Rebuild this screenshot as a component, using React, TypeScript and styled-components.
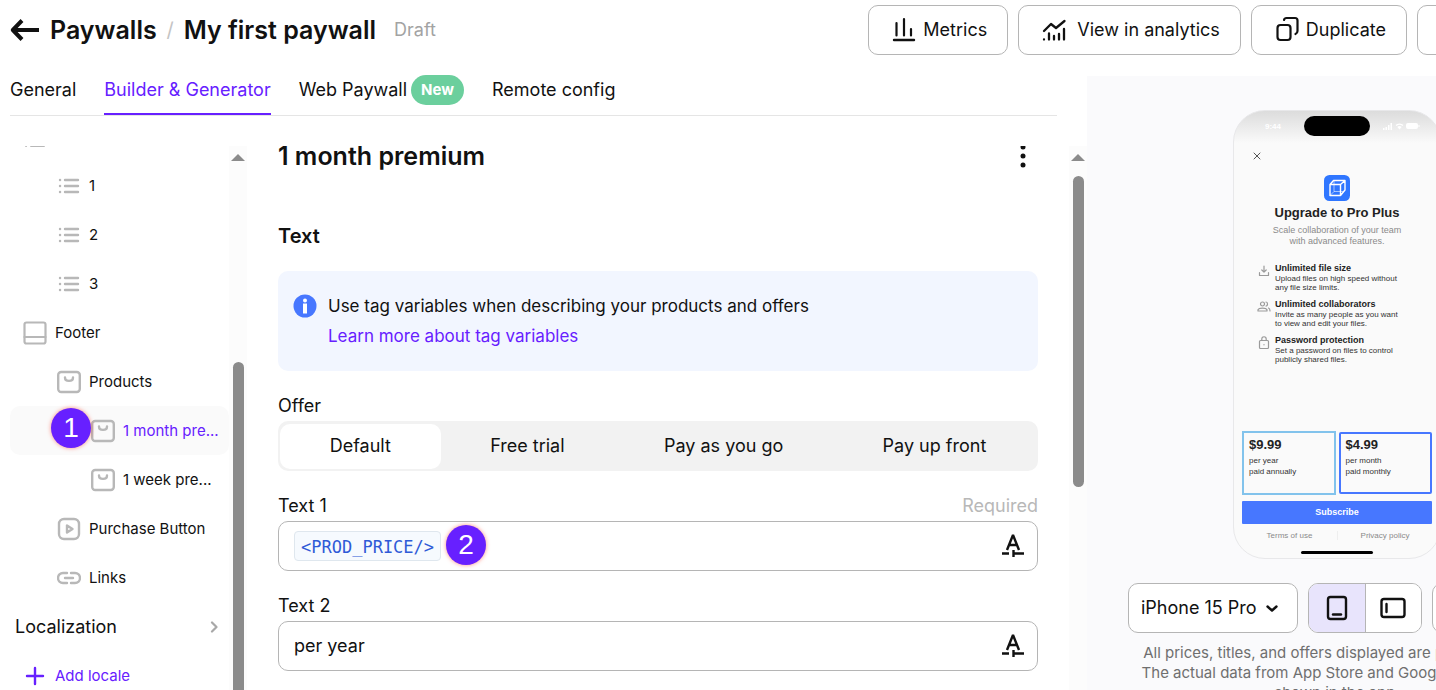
import React from "react";
import styled, { createGlobalStyle } from "styled-components";

const GlobalStyle = createGlobalStyle`
  *, *::before, *::after { box-sizing: border-box; }
  body {
    margin: 0;
    background: #fff;
    color: #111;
    font-family: Inter, "Liberation Sans", sans-serif;
    font-size: 18px;
    line-height: 30px;
    overflow: hidden;
  }
  button, input, select { font: inherit; color: inherit; }
  button { cursor: pointer; background: none; border: 0; padding: 0; }
  h1, h2, h3, p, ul { margin: 0; padding: 0; font: inherit; }
  ul { list-style: none; }
  svg { display: block; flex: none; }
`;

const purple = "#6720ff";
const line = "#b5b5b5";
const iconGrey = "#b8b8b8";

const Viewport = styled.div`
  height: 100vh;
  overflow: hidden;
`;

const Page = styled.div`
  display: flex;
  flex-direction: column;
  height: 100%;
  min-width: 1587px;
`;

/* Header */

const Header = styled.header`
  display: flex;
  justify-content: space-between;
  height: 76px;
  padding: 5px 10px 0;
`;

const Crumbs = styled.div`
  display: flex;
  align-items: center;
  height: 50px;
`;

const Title = styled.h1`
  font-size: 25px;
  font-weight: 600;
`;

const BackLink = styled.a`
  display: flex;
  align-items: center;
  gap: 10px;
  color: inherit;
  text-decoration: none;
  font-size: 25px;
  font-weight: 600;
`;

const Slash = styled.span`
  width: 27px;
  text-align: center;
  font-size: 20px;
  color: #c4c4c4;
`;

const Status = styled.span`
  margin-left: 18px;
  color: #a3a3a3;
`;

const Actions = styled.div`
  display: flex;
  gap: 10px;
`;

const ActionButton = styled.button<{ $gap?: number }>`
  display: flex;
  align-items: center;
  gap: ${(p) => p.$gap ?? 6}px;
  height: 50px;
  min-width: 140px;
  padding: 0 20px;
  border: 1px solid ${line};
  border-radius: 10px;
  background: #fff;
`;

const SaveButton = styled(ActionButton)`
  width: 160px;
`;

/* Columns */

const Body = styled.div`
  display: flex;
  flex: 1;
  min-height: 0;
`;

const Workspace = styled.div`
  display: flex;
  flex-direction: column;
  flex: 1;
  min-width: 0;
`;

const Tabs = styled.nav`
  display: flex;
  flex: none;
  gap: 28px;
  height: 40px;
  margin: 0 30px 30px 10px;
  border-bottom: 1px solid #e5e5e5;
`;

const Tab = styled.a<{ $active?: boolean }>`
  display: flex;
  gap: 4px;
  height: 39px;
  line-height: 28px;
  color: ${(p) => (p.$active ? purple : "inherit")};
  border-bottom: 2px solid ${(p) => (p.$active ? purple : "transparent")};
  text-decoration: none;
  white-space: nowrap;
`;

const NewBadge = styled.span`
  height: 30px;
  margin-top: -1px;
  padding: 0 10px;
  border-radius: 15px;
  background: #6bcf9d;
  color: #fff;
  font-size: 15px;
  font-weight: 700;
  line-height: 30px;
`;

const Panes = styled.div`
  display: flex;
  flex: 1;
  min-height: 0;
`;

const ScrollTrack = styled.div`
  display: flex;
  flex: none;
  flex-direction: column;
  align-items: center;
  width: 18px;
  padding-top: 8px;
  background: #fcfcfc;
`;

const Arrow = styled.div`
  border: 7px solid transparent;
  border-top: 0;
  border-bottom: 7px solid #8b8b8b;
`;

const Thumb = styled.div<{ $top: number; $length?: number }>`
  flex: ${(p) => (p.$length ? "none" : "1")};
  width: 11px;
  height: ${(p) => (p.$length ? p.$length + "px" : "auto")};
  margin-top: ${(p) => p.$top}px;
  border-radius: ${(p) => (p.$length ? "6px" : "6px 6px 0 0")};
  background: #8b8b8b;
`;

/* Sidebar tree */

const Sidebar = styled.aside`
  display: flex;
  flex: none;
  width: 247px;
  padding-left: 10px;
  overflow: hidden;
`;

const Tree = styled.ul`
  flex: 1;
  min-width: 0;
  margin-top: -34px;
`;

const TreeScroll = styled.div`
  flex: 1;
  min-width: 0;
  overflow: hidden;
`;

const TreeItem = styled.li`
  position: relative;
`;

const TreeButton = styled.button<{ $level: number; $active?: boolean; $accent?: boolean }>`
  display: flex;
  align-items: center;
  gap: 8px;
  width: 100%;
  height: 49px;
  padding: 0 8px 0 ${(p) => 13 + p.$level * 34}px;
  border-radius: 10px;
  background: ${(p) => (p.$active ? "#fafafa" : "none")};
  color: ${(p) => (p.$active || p.$accent ? purple : "inherit")};
  font-size: 15px;
  text-align: left;
  white-space: nowrap;
`;

const TreeSection = styled.button`
  display: flex;
  align-items: center;
  justify-content: space-between;
  width: 100%;
  height: 49px;
  padding: 0 10px 0 5px;
`;

const Callout = styled.span<{ $left: number; $top: number }>`
  position: absolute;
  left: ${(p) => p.$left}px;
  top: ${(p) => p.$top}px;
  width: 40px;
  height: 40px;
  border-radius: 50%;
  background: ${purple};
  box-shadow: 0 0 4px rgba(255, 70, 50, 0.6);
  color: #fff;
  font: 28px/40px "Liberation Sans", Arial, sans-serif;
  text-align: center;
`;

/* Editor */

const Editor = styled.main`
  flex: 1;
  min-width: 0;
  padding: 0 31px;
`;

const EditorHead = styled.div`
  display: flex;
  justify-content: space-between;
  height: 75px;
`;

const PaneTitle = styled.h2`
  font-size: 25px;
  font-weight: 600;
  line-height: 20px;
`;

const MenuButton = styled.button`
  width: 30px;
  height: 22px;
`;

const SectionTitle = styled.h3`
  margin-bottom: 20px;
  font-size: 20px;
  font-weight: 600;
`;

const Notice = styled.div`
  display: flex;
  gap: 11px;
  margin-bottom: 20px;
  padding: 20px 15px;
  border-radius: 10px;
  background: #f2f6ff;
  font-size: 17px;
`;

const NoticeIcon = styled.span`
  padding-top: 3px;
`;

const NoticeLink = styled.a`
  color: ${purple};
  text-decoration: none;
`;

const Field = styled.div`
  position: relative;
  margin-bottom: 20px;
`;

const FieldHead = styled.div`
  display: flex;
  justify-content: space-between;
`;

const Required = styled.span`
  color: #b8b8b8;
`;

const Segments = styled.div`
  display: flex;
  height: 50px;
  padding: 3px 2px 2px;
  border-radius: 10px;
  background: #f2f2f2;
`;

const Segment = styled.button<{ $active?: boolean }>`
  flex: 1 1 auto;
  padding-bottom: 2px;
  border-radius: 10px;
  background: ${(p) => (p.$active ? "#fff" : "none")};
`;

const InputBox = styled.div`
  display: flex;
  align-items: center;
  height: 50px;
  padding: 0 11px 0 15px;
  border: 1px solid ${line};
  border-radius: 10px;
`;

const TagChip = styled.code`
  flex: none;
  height: 30px;
  padding: 0 6px;
  border: 1px solid #dfe7ee;
  border-radius: 4px;
  background: #f6fafe;
  color: #2f5bd7;
  font: 17px/30px "DejaVu Sans Mono", monospace;
`;

const TextInput = styled.input`
  flex: 1;
  min-width: 0;
  padding: 0;
  border: 0;
  outline: 0;
  background: none;
`;

/* Preview */

const Preview = styled.aside`
  display: flex;
  flex: none;
  flex-direction: column;
  align-items: center;
  width: 500px;
  padding-top: 34px;
  background: #fafafc;
`;

const Phone = styled.div`
  display: flex;
  flex: none;
  flex-direction: column;
  width: 208px;
  height: 449px;
  margin-bottom: 24px;
  padding: 0 8px;
  border: 1px solid #e8e8ea;
  border-radius: 32px;
  background: linear-gradient(#dcdcdc, #fafafa 32px);
  font-family: "Liberation Sans", Arial, sans-serif;
  font-size: 8px;
  line-height: 9px;
  color: #333;
`;

const StatusBar = styled.div`
  display: grid;
  grid-template-columns: 1fr 66px 1fr;
  align-items: center;
  justify-items: center;
  height: 20px;
  margin-top: 5px;
  color: #fff;
  font-weight: 700;
`;

const Island = styled.div`
  width: 66px;
  height: 20px;
  border-radius: 10px;
  background: #000;
`;

const CloseButton = styled.button`
  width: 10px;
  height: 10px;
  margin: 15px 0 14px 10px;
`;

const Hero = styled.div`
  display: flex;
  flex-direction: column;
  align-items: center;
  height: 87px;
  text-align: center;
`;

const HeroTitle = styled.h3`
  font-size: 13px;
  font-weight: 700;
  line-height: 24px;
  color: #222;
`;

const HeroText = styled.p`
  width: 140px;
  font-size: 9px;
  line-height: 11px;
  color: #8a8a8a;
`;

const Feature = styled.li`
  display: flex;
  gap: 4px;
  height: 36px;
  padding-left: 15px;
`;

const FeatureIcon = styled.span`
  padding-top: 2px;
`;

const FeatureTitle = styled.h3`
  font-size: 9px;
  font-weight: 700;
  line-height: 12px;
  color: #222;
`;

const Plans = styled.div`
  display: flex;
  align-items: center;
  gap: 3px;
  height: 64px;
  margin-top: auto;
`;

const Plan = styled.button<{ $selected?: boolean }>`
  flex: 1;
  height: ${(p) => (p.$selected ? 62 : 64)}px;
  padding: ${(p) => (p.$selected ? 3 : 4)}px 5px;
  border: 2px solid ${(p) => (p.$selected ? "#4777ff" : "#82c3ec")};
  border-radius: ${(p) => (p.$selected ? 2 : 0)}px;
  display: flex;
  flex-direction: column;
  line-height: 11px;
  text-align: left;
`;

const Price = styled.strong`
  margin-bottom: 2px;
  font-size: 13px;
  line-height: 16px;
  color: #222;
`;

const Subscribe = styled.button`
  height: 23px;
  margin-top: 6px;
  border-radius: 1px;
  background: #4777ff;
  color: #fff;
  font-size: 9px;
  font-weight: 700;
`;

const Legal = styled.div`
  display: grid;
  grid-template-columns: 1fr 1fr;
  height: 9px;
  margin-top: 7px;
  text-align: center;
`;

const LegalLink = styled.a`
  color: #8a8a8a;
  text-decoration: none;
  & + & { border-left: 1px solid #eee; }
`;

const HomeBar = styled.div`
  align-self: center;
  flex: none;
  width: 72px;
  height: 3px;
  margin: 11px 0 4px;
  border-radius: 2px;
  background: #000;
`;

const DeviceControls = styled.div`
  display: flex;
  flex: none;
  gap: 10px;
  height: 50px;
`;

const SelectWrap = styled.label`
  position: relative;
  svg { position: absolute; right: 19px; top: 18px; pointer-events: none; }
`;

const DeviceSelect = styled.select`
  appearance: none;
  width: 170px;
  height: 50px;
  padding: 0 12px;
  border: 1px solid ${line};
  border-radius: 10px;
  background: #fff;
`;

const Orientation = styled.div`
  display: flex;
  width: 114px;
  border: 1px solid ${line};
  border-radius: 10px;
  background: #fff;
  overflow: hidden;
`;

const OrientationButton = styled.button<{ $active?: boolean }>`
  display: flex;
  flex: 1;
  align-items: center;
  justify-content: center;
  background: ${(p) => (p.$active ? "#e8e4fc" : "#fff")};
  & + & { border-left: 1px solid ${line}; }
`;

const Disclaimer = styled.p`
  flex: none;
  width: 410px;
  margin-top: 10px;
  color: #6f6f6f;
  font-size: 15px;
  line-height: 20px;
  text-align: center;
`;

/* Icons */

const Svg = ({ w = 24, h = w, sw = 2, color = "currentColor", children }: {
  w?: number; h?: number; sw?: number; color?: string; children: React.ReactNode;
}) => (
  <svg width={w} height={h} viewBox={`0 0 ${w} ${h}`} fill="none" stroke={color}
    strokeWidth={sw} strokeLinecap="round" strokeLinejoin="round" aria-hidden="true">
    {children}
  </svg>
);

const BackIcon = () => (
  <Svg w={30} h={24} sw={4}>
    <path d="M29 12H4" strokeLinecap="butt" />
    <path d="M12 2.500L2.800 12l9.200 9.500" strokeLinecap="butt" />
  </Svg>
);

const MetricsIcon = () => (
  <Svg w={28} h={28} sw={2.2}>
    <path d="M7.500 7v12.500M15 3v16.500M22 13v6.500" />
    <path d="M5 24h20" strokeWidth="2.400" />
  </Svg>
);

const AnalyticsIcon = () => (
  <Svg w={30} h={28} sw={2.3}>
    <path d="M5 15l7-7 5 4 8.500-7" />
    <path d="M5 23.500v.1M10 17.500v6M15 20v3.500M20 18v5.500M25 13v10.500" />
  </Svg>
);

const DuplicateIcon = () => (
  <Svg w={28} h={28} sw={2.2}>
    <rect x="5.500" y="9" width="13" height="15" rx="3" />
    <path d="M12 4c.3-1.300 1-2 2.500-2H23c1.700 0 2.500.8 2.500 2.500V15c0 1.700-.8 2.500-2 3" />
  </Svg>
);

const ListIcon = () => (
  <Svg color={iconGrey} sw={2.4}>
    <path d="M8 6h13M8 12h13M8 18h13M3 6h.1M3 12h.1M3 18h.1" />
  </Svg>
);

const FeatureListIcon = () => (
  <Svg color={iconGrey}>
    <path d="M8 3h13M8 12h13M8 21h13M3 3h.1M3 12h.1M3 21h.1" />
  </Svg>
);

const FooterIcon = () => (
  <Svg color={iconGrey} sw={2.2}>
    <rect x="1.500" y="1.500" width="21" height="21" rx="2" />
    <path d="M1.500 16h21" />
  </Svg>
);

const ProductIcon = () => (
  <Svg color={iconGrey} sw={2.4}>
    <rect x="1.200" y="2" width="21.600" height="20" rx="3" />
    <path d="M8 7.500c0 4.500 8 4.500 8 0" />
  </Svg>
);

const PlayIcon = () => (
  <Svg color={iconGrey} sw={2.4}>
    <rect x="2" y="2" width="20" height="20" rx="5" />
    <path d="M10 8.500v7l5.500-3.500z" />
  </Svg>
);

const LinkIcon = () => (
  <Svg color={iconGrey} sw={2.4}>
    <path d="M10 7H6a5 5 0 000 10h4M14 7h4a5 5 0 010 10h-4M8 12h8" />
  </Svg>
);

const PlusIcon = () => (
  <Svg sw={2.4}><path d="M12 4v16M4 12h16" /></Svg>
);

const ChevronRight = () => (
  <Svg w={10} h={12} sw={2.2} color="#a8a8a8"><path d="M3 1.500L7.500 6 3 10.500" /></Svg>
);

const ChevronDown = () => (
  <Svg w={14} sw={2.4}><path d="M2.500 5.500L7 9.500l4.500-4" /></Svg>
);

const DotsIcon = () => (
  <svg width="30" height="22" viewBox="0 0 30 22" fill="#111" aria-hidden="true">
    <circle cx="15" cy="1" r="2.500" />
    <circle cx="15" cy="10" r="2.500" />
    <circle cx="15" cy="19" r="2.500" />
  </svg>
);

const InfoIcon = () => (
  <svg width="24" height="24" viewBox="0 0 24 24" aria-hidden="true">
    <circle cx="12" cy="12" r="11.500" fill="#4777ff" />
    <circle cx="12" cy="6.500" r="2" fill="#fff" />
    <path d="M10 9.500h4v10h-4z" fill="#fff" />
  </svg>
);

const TextStyleIcon = () => (
  <Svg w={26} sw={2.4}>
    <path d="M7 17l6-15 6 15M9 12h8" strokeLinecap="butt" strokeLinejoin="bevel" />
    <path d="M2 20.500h7M13.500 20.500H24M13.500 17v7" strokeLinecap="butt" />
  </Svg>
);

const CubeIcon = () => (
  <svg width="26" height="26" viewBox="0 0 26 26" fill="none" stroke="#fff" strokeLinejoin="round" aria-hidden="true">
    <rect width="26" height="26" rx="5.500" fill="#2f76ff" stroke="none" />
    <path d="M6 9.500h10.500v11H6zM6 9.500L9.500 5.500H21l-4.500 4M21 5.500V15l-4.500 5.500" strokeWidth="1.400" />
    <path d="M10 6v10.500H20M10 16.500l-4 4" strokeWidth=".8" opacity=".7" />
  </svg>
);

const SignalIcons = () => (
  <svg width="38" height="8" viewBox="0 0 38 8" fill="#fff" aria-hidden="true">
    <path d="M1 6h1.500v2H1zM3.500 5H5v3H3.500zM6 3h1.500v5H6zM8.500 1H10v7H8.500z" />
    <path d="M13.500 3a6 6 0 018 0l-1 1.100a4.500 4.500 0 00-6 0zM15.300 5a3.300 3.300 0 014.400 0l-2.200 2.500z" />
    <rect x="24" y="1" width="12" height="6" rx="2" />
    <rect x="36.500" y="3" width="1" height="2" />
  </svg>
);

const UploadIcon = () => (
  <Svg w={14} sw={1.2} color="#9a9a9a"><path d="M7 2v6M4.800 6L7 8.200 9.200 6M2.500 8.500v3h9v-3" /></Svg>
);

const PeopleIcon = () => (
  <Svg w={14} sw={1.2} color="#9a9a9a">
    <circle cx="5.500" cy="4" r="2" />
    <path d="M1 11V9.700C2 7.500 9 7.500 10 9.700V11zM9 2c2 0 2 4 0 4M11.500 8c1 .4 1.500 1 1.500 3" />
  </Svg>
);

const LockIcon = () => (
  <Svg w={14} sw={1.2} color="#9a9a9a">
    <rect x="2.500" y="4.500" width="9" height="8" rx="1" />
    <path d="M4.800 4.500V3c0-3 4.400-3 4.400 0v1.500M7 8.500v.3" />
  </Svg>
);

const PortraitIcon = () => (
  <Svg w={28} sw={2.4}><rect x="5" y="3" width="18" height="22" rx="2.500" /><path d="M10 20.500h8" /></Svg>
);

const LandscapeIcon = () => (
  <Svg w={28} sw={2.4}><rect x="2.500" y="5" width="23" height="18" rx="2.500" /><path d="M7.500 10v8" /></Svg>
);

const treeItems = [
  { label: "1", level: 1, icon: <ListIcon /> },
  { label: "2", level: 1, icon: <ListIcon /> },
  { label: "3", level: 1, icon: <ListIcon /> },
  { label: "Footer", level: 0, icon: <FooterIcon /> },
  { label: "Products", level: 1, icon: <ProductIcon /> },
  { label: "1 month pre...", level: 2, icon: <ProductIcon />, active: true },
  { label: "1 week pre...", level: 2, icon: <ProductIcon /> },
  { label: "Purchase Button", level: 1, icon: <PlayIcon /> },
  { label: "Links", level: 1, icon: <LinkIcon /> },
];

const features = [
  { title: "Unlimited file size", lines: ["Upload files on high speed without", "any file size limits."], icon: <UploadIcon /> },
  { title: "Unlimited collaborators", lines: ["Invite as many people as you want", "to view and edit your files."], icon: <PeopleIcon /> },
  { title: "Password protection", lines: ["Set a password on files to control", "publicly shared files."], icon: <LockIcon /> },
];

const offers = ["Default", "Free trial", "Pay as you go", "Pay up front"];

const PhonePreview = () => (
  <Phone>
    <StatusBar>
      <span>9:44</span>
      <Island />
      <SignalIcons />
    </StatusBar>
    <CloseButton aria-label="Close">
      <Svg w={10} sw={1} color="#555"><path d="M2 2l6 6M8 2L2 8" /></Svg>
    </CloseButton>
    <Hero>
      <CubeIcon />
      <HeroTitle>Upgrade to Pro Plus</HeroTitle>
      <HeroText>Scale collaboration of your team with advanced features.</HeroText>
    </Hero>
    <ul>
      {features.map((f) => (
        <Feature key={f.title}>
          <FeatureIcon>{f.icon}</FeatureIcon>
          <div>
            <FeatureTitle>{f.title}</FeatureTitle>
            {f.lines.map((l) => <p key={l}>{l}</p>)}
          </div>
        </Feature>
      ))}
    </ul>
    <Plans>
      <Plan>
        <Price>$9.99</Price>
        <span>per year</span>
        <span>paid annually</span>
      </Plan>
      <Plan $selected>
        <Price>$4.99</Price>
        <span>per month</span>
        <span>paid monthly</span>
      </Plan>
    </Plans>
    <Subscribe>Subscribe</Subscribe>
    <Legal>
      <LegalLink href="#terms">Terms of use</LegalLink>
      <LegalLink href="#privacy">Privacy policy</LegalLink>
    </Legal>
    <HomeBar />
  </Phone>
);

export default function App() {
  return (
    <Viewport>
      <GlobalStyle />
      <Page>
        <Header>
          <Crumbs>
            <BackLink href="#paywalls"><BackIcon />Paywalls</BackLink>
            <Slash>/</Slash>
            <Title>My first paywall</Title>
            <Status>Draft</Status>
          </Crumbs>
          <Actions>
            <ActionButton><MetricsIcon />Metrics</ActionButton>
            <ActionButton $gap={8}><AnalyticsIcon />View in analytics</ActionButton>
            <ActionButton><DuplicateIcon />Duplicate</ActionButton>
            <SaveButton aria-label="Save" />
          </Actions>
        </Header>
        <Body>
          <Workspace>
            <Tabs>
              <Tab href="#general">General</Tab>
              <Tab href="#builder" $active>Builder &amp; Generator</Tab>
              <Tab href="#web">Web Paywall<NewBadge>New</NewBadge></Tab>
              <Tab href="#remote">Remote config</Tab>
            </Tabs>
            <Panes>
              <Sidebar>
                <TreeScroll>
                  <Tree>
                    <TreeItem>
                      <TreeButton $level={0} aria-label="Feature list"><FeatureListIcon /></TreeButton>
                    </TreeItem>
                    {treeItems.map((item) => (
                      <TreeItem key={item.label}>
                        <TreeButton $level={item.level} $active={item.active}>
                          {item.icon}
                          {item.label}
                        </TreeButton>
                        {item.active && <Callout $left={41} $top={2}>1</Callout>}
                      </TreeItem>
                    ))}
                    <TreeItem>
                      <TreeSection>Localization<ChevronRight /></TreeSection>
                    </TreeItem>
                    <TreeItem>
                      <TreeButton $level={0} $accent><PlusIcon />Add locale</TreeButton>
                    </TreeItem>
                  </Tree>
                </TreeScroll>
                <ScrollTrack><Arrow /><Thumb $top={201} /></ScrollTrack>
              </Sidebar>
              <Editor>
                <EditorHead>
                  <PaneTitle>1 month premium</PaneTitle>
                  <MenuButton aria-label="More options"><DotsIcon /></MenuButton>
                </EditorHead>
                <SectionTitle>Text</SectionTitle>
                <Notice>
                  <NoticeIcon><InfoIcon /></NoticeIcon>
                  <div>
                    <p>Use tag variables when describing your products and offers</p>
                    <NoticeLink href="#tags">Learn more about tag variables</NoticeLink>
                  </div>
                </Notice>
                <Field>
                  <FieldHead>Offer</FieldHead>
                  <Segments role="group" aria-label="Offer">
                    {offers.map((o, i) => <Segment key={o} $active={i === 0}>{o}</Segment>)}
                  </Segments>
                </Field>
                <Field>
                  <FieldHead>
                    <label htmlFor="text1">Text 1</label>
                    <Required>Required</Required>
                  </FieldHead>
                  <InputBox>
                    <TagChip>&lt;PROD_PRICE/&gt;</TagChip>
                    <TextInput id="text1" />
                    <button aria-label="Text 1 style"><TextStyleIcon /></button>
                  </InputBox>
                  <Callout $left={168} $top={34}>2</Callout>
                </Field>
                <Field>
                  <FieldHead><label htmlFor="text2">Text 2</label></FieldHead>
                  <InputBox>
                    <TextInput id="text2" defaultValue="per year" />
                    <button aria-label="Text 2 style"><TextStyleIcon /></button>
                  </InputBox>
                </Field>
              </Editor>
              <ScrollTrack><Arrow /><Thumb $top={15} $length={311} /></ScrollTrack>
            </Panes>
          </Workspace>
          <Preview>
            <PhonePreview />
            <DeviceControls>
              <SelectWrap>
                <DeviceSelect aria-label="Device"><option>iPhone 15 Pro</option></DeviceSelect>
                <ChevronDown />
              </SelectWrap>
              <Orientation>
                <OrientationButton $active aria-label="Portrait"><PortraitIcon /></OrientationButton>
                <OrientationButton aria-label="Landscape"><LandscapeIcon /></OrientationButton>
              </Orientation>
              <Orientation />
            </DeviceControls>
            <Disclaimer>
              All prices, titles, and offers displayed are placeholders.
              The actual data from App Store and Google Play will be
              shown in the app.
            </Disclaimer>
          </Preview>
        </Body>
      </Page>
    </Viewport>
  );
}
